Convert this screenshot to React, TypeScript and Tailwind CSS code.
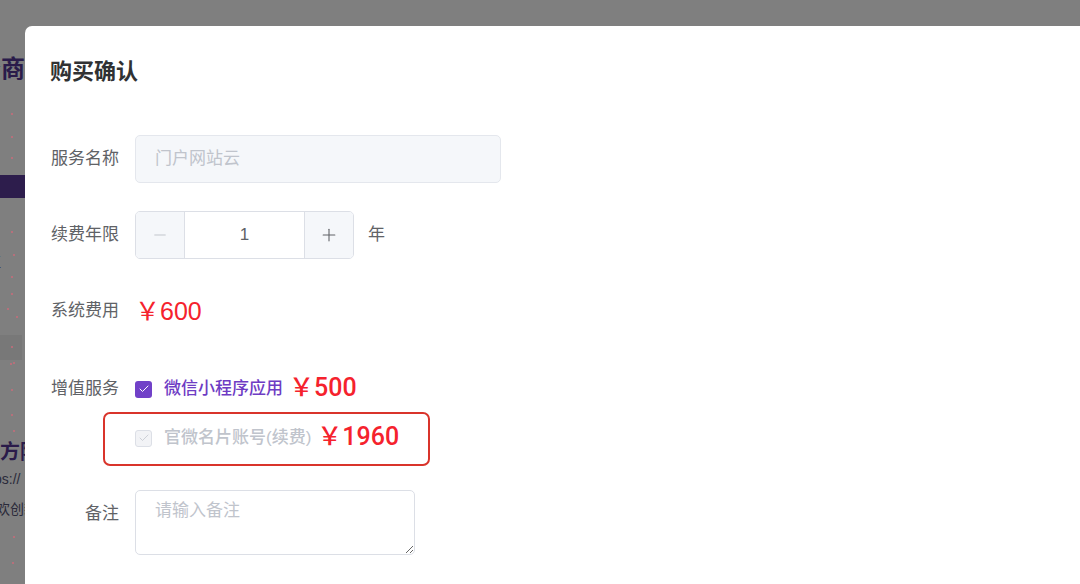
import { Check, Minus, Plus } from 'lucide-react';

const dots = [
  [12, 114], [12, 137], [12, 158], [12, 232], [14, 255], [12, 277], [12, 294],
  [8, 309], [17, 317], [12, 347], [11, 364], [14, 363], [12, 390], [12, 415],
  [14, 431], [14, 537], [13, 563],
];

function Row({ label, children }: { label: string; children: React.ReactNode }) {
  return (
    <div className="flex items-start">
      <div className="w-[69px] shrink-0 text-right leading-[48px] text-[17px] text-[#606266]">{label}</div>
      <div className="ml-4 flex min-h-[48px] items-center">{children}</div>
    </div>
  );
}

function Price({ value, bold }: { value: string; bold?: boolean }) {
  return (
    <span
      className={`ml-[6px] mt-[-3px] text-[25px] leading-none text-[#f5222d] ${
        bold ? "font-['Roboto','Noto_Sans_CJK_SC',sans-serif] font-medium" : ''
      }`}
    >
      ￥{value}
    </span>
  );
}

export default function App() {
  return (
    <div className="relative h-[584px] w-[1080px] overflow-hidden bg-[#7f7f7f] font-['Liberation_Sans','Noto_Sans_CJK_SC',sans-serif]">
      {/* page behind the overlay */}
      <div className="flex w-[25px] flex-col overflow-hidden">
        <div className="mt-[55px] ml-[-47px] whitespace-nowrap text-[24px] font-bold leading-[28px] text-[#2a1b4a]">服务商城</div>
        <div className="mt-[92px] h-[23px] w-full bg-[#2d1d4c]" />
        <div className="mt-[55px] ml-[-14px] whitespace-nowrap text-[15px] leading-[18px] text-[#2a1b4a]">值</div>
        <div className="mt-[64px] h-[25px] w-[22px] bg-[#787878]" />
        <div className="mt-[80px] whitespace-nowrap text-[20px] font-bold leading-[24px] text-[#2a1b4a]">方阿</div>
        <div className="mt-[6px] ml-[-6px] whitespace-nowrap text-[14px] leading-[18px] text-[#2a2a3a]">ps://</div>
        <div className="mt-[12px] ml-[-4px] whitespace-nowrap text-[14px] leading-[18px] text-[#2a2a3a]">欢创新</div>
      </div>
      <svg className="absolute left-0 top-0" width="25" height="584">
        {dots.map(([x, y], i) => (
          <circle key={i} cx={x} cy={y} r="1" fill="#c86b7a" />
        ))}
      </svg>

      {/* dialog */}
      <div className="absolute left-[25px] top-[26px] h-[600px] w-[1100px] rounded-t-[7px] bg-white px-[25px] pt-[31px] text-[#606266]">
        <h2 className="text-[22px] font-bold leading-[30px] text-[#303133]">购买确认</h2>

        <div className="mt-[48px] flex flex-col gap-[28px]">
          <Row label="服务名称">
            <div className="flex h-[48px] w-[366px] items-center rounded-[5px] border border-[#e4e7ed] bg-[#f5f7fa] px-[19px] text-[17px] text-[#c0c4cc]">
              门户网站云
            </div>
          </Row>

          <Row label="续费年限">
            <div className="flex h-[48px] w-[219px] overflow-hidden rounded-[5px] border border-[#dcdfe6]">
              <div className="flex w-[49px] items-center justify-center border-r border-[#dcdfe6] bg-[#f5f7fa] text-[#c0c4cc]">
                <Minus size={18} strokeWidth={1.3} />
              </div>
              <div className="flex flex-1 items-center justify-center text-[17px] text-[#606266]">1</div>
              <div className="flex w-[49px] items-center justify-center border-l border-[#dcdfe6] bg-[#f5f7fa] text-[#606266]">
                <Plus size={20} strokeWidth={1.3} />
              </div>
            </div>
            <span className="ml-[14px] text-[17px] text-[#606266]">年</span>
          </Row>

          <Row label="系统费用">
            <span className="ml-[-6px] mt-[3px] flex">
              <Price value="600" />
            </span>
          </Row>
        </div>

        <div className="mt-[30px] flex flex-col gap-[28px]">
          <Row label="增值服务">
            <div className="flex flex-col gap-px">
              <div className="flex h-[48px] items-center">
                <span className="flex h-[17px] w-[17px] items-center justify-center rounded-[3px] bg-[#7141c8] text-white">
                  <Check size={12} strokeWidth={2} />
                </span>
                <span className="ml-[12px] text-[17px] font-medium text-[#6e3cc4]">微信小程序应用</span>
                <Price value="500" bold />
              </div>
              <div className="relative flex h-[48px] items-center">
                <div className="absolute left-[-32px] top-[-2px] h-[54px] w-[327px] rounded-[7px] border-2 border-[#d9342b]" />
                <span className="flex h-[17px] w-[17px] items-center justify-center rounded-[3px] border border-[#dcdfe6] bg-[#f2f3f6] text-[#c0c4cc]">
                  <Check size={12} strokeWidth={1.5} />
                </span>
                <span className="ml-[12px] text-[17px] font-medium text-[#c0c4cc]">官微名片账号(续费)</span>
                <Price value="1960" bold />
              </div>
            </div>
          </Row>

          <Row label="备注">
            <textarea
              placeholder="请输入备注"
              className="h-[65px] w-[280px] rounded-[5px] border border-[#dcdfe6] px-[19px] py-[8px] text-[17px] leading-[24px] text-[#606266] outline-none placeholder:text-[#c0c4cc]"
            />
          </Row>
        </div>
      </div>
    </div>
  );
}
